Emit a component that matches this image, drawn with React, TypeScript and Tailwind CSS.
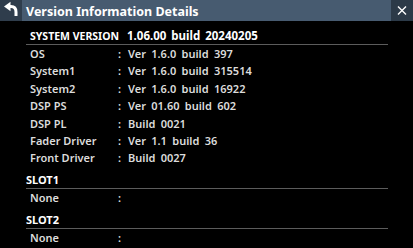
const rows: [string, string][] = [
  ["OS", "Ver 1.6.0 build 397"],
  ["System1", "Ver 1.6.0 build 315514"],
  ["System2", "Ver 1.6.0 build 16922"],
  ["DSP PS", "Ver 01.60 build 602"],
  ["DSP PL", "Build 0021"],
  ["Fader Driver", "Ver 1.1 build 36"],
  ["Front Driver", "Build 0027"],
];

const Row = ({ label, value }: { label: string; value: string }) => (
  <div className="flex leading-[17.4px] pl-[4px] whitespace-nowrap font-semibold">
    <span className="w-[88px] shrink-0">{label}</span>
    <span className="w-[10px] shrink-0">:</span>
    <span className="[word-spacing:2.5px]">{value}</span>
  </div>
);

const Slot = ({ name, gap }: { name: string; gap: string }) => (
  <div className={gap}>
    <div className="leading-[16px] font-bold text-white border-b border-[#5c5c5c]">{name}</div>
    <Row label="None" value="" />
  </div>
);

export default function App() {
  return (
    <div
      className="w-[413px] h-[248px] bg-black overflow-hidden text-[#dcdcdc] text-[11px]"
      style={{ fontFamily: '"Noto Sans", "Open Sans", sans-serif' }}
    >
      {/* Header */}
      <div className="flex h-[21px]">
        <div className="w-[22px] bg-[#2f3d4c] flex items-center justify-center">
          <svg width="22" height="21" viewBox="0 0 22 21">
            <polygon points="4,6.5 10.5,1.8 10.5,11.2" fill="#fff" />
            <path d="M9 6.5 H11 Q16 6.5 16 12 V16" stroke="#fff" strokeWidth="3" fill="none" />
          </svg>
        </div>
        <div className="flex-1 bg-[#475b70] flex items-end pl-[4px] pb-[1px]">
          <span className="text-white font-bold text-[12.5px] leading-[16px] whitespace-nowrap">
            Version Information Details
          </span>
        </div>
        <div className="w-[22px] bg-[#2c3a48] flex items-center justify-center">
          <svg width="22" height="21" viewBox="0 0 22 21">
            <path d="M7 6.5 L15 14.5 M15 6.5 L7 14.5" stroke="#fff" strokeWidth="1.4" />
          </svg>
        </div>
      </div>

      {/* Body */}
      <div className="pl-[26px] pr-[25px]">
        <div className="flex items-baseline pt-[7px] leading-[16px] border-b border-[#5c5c5c] pl-[4px] text-white font-bold whitespace-nowrap">
          <span className="w-[97px] shrink-0 text-[10.5px]">SYSTEM VERSION</span>
          <span className="text-[11.5px] [word-spacing:2px]">1.06.00 build 20240205</span>
        </div>
        {rows.map(([l, v]) => (
          <Row key={l} label={l} value={v} />
        ))}
        <Slot name="SLOT1" gap="mt-[5px]" />
        <Slot name="SLOT2" gap="mt-[6px]" />
      </div>
    </div>
  );
}
